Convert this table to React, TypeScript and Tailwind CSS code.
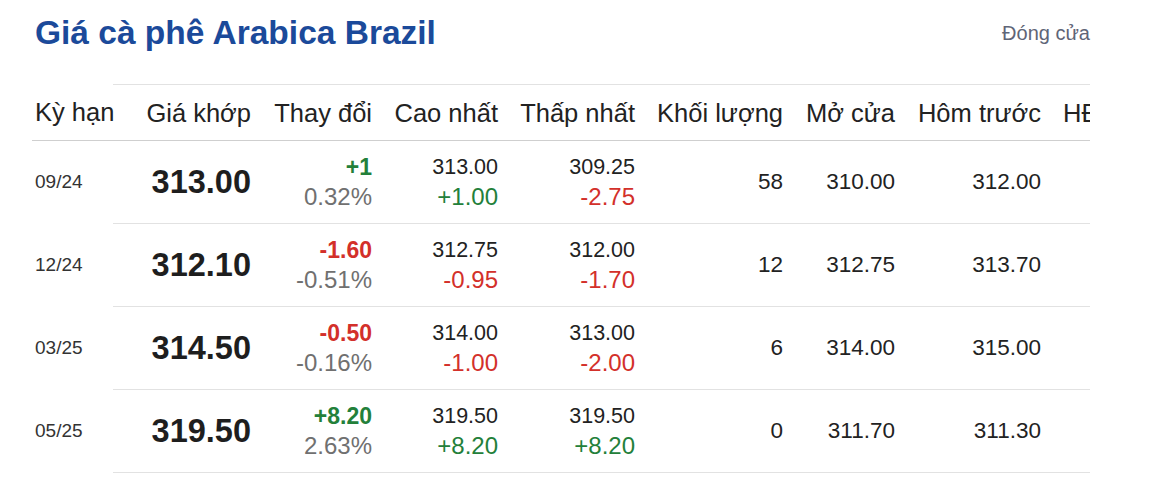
import React from "react";

type Row = {
  term: string;
  price: string;
  chg: string;
  pct: string;
  up: boolean;
  high: string;
  highChg: string;
  highUp: boolean;
  low: string;
  lowChg: string;
  lowUp: boolean;
  vol: string;
  open: string;
  prev: string;
};

const rows: Row[] = [
  { term: "09/24", price: "313.00", chg: "+1", pct: "0.32%", up: true, high: "313.00", highChg: "+1.00", highUp: true, low: "309.25", lowChg: "-2.75", lowUp: false, vol: "58", open: "310.00", prev: "312.00" },
  { term: "12/24", price: "312.10", chg: "-1.60", pct: "-0.51%", up: false, high: "312.75", highChg: "-0.95", highUp: false, low: "312.00", lowChg: "-1.70", lowUp: false, vol: "12", open: "312.75", prev: "313.70" },
  { term: "03/25", price: "314.50", chg: "-0.50", pct: "-0.16%", up: false, high: "314.00", highChg: "-1.00", highUp: false, low: "313.00", lowChg: "-2.00", lowUp: false, vol: "6", open: "314.00", prev: "315.00" },
  { term: "05/25", price: "319.50", chg: "+8.20", pct: "2.63%", up: true, high: "319.50", highChg: "+8.20", highUp: true, low: "319.50", lowChg: "+8.20", lowUp: true, vol: "0", open: "311.70", prev: "311.30" },
];

const GREEN = "text-[#23803a]";
const RED = "text-[#d3302a]";

export default function App() {
  return (
    <div className="w-[1154px] h-[486px] bg-white font-['Liberation_Sans',Arial,sans-serif] text-[#222]">
      <div className="pl-[32px] pr-[64px]">
        <div className="flex items-center justify-between h-[40px] mt-[13px] mb-[31px]">
          <h1 className="pl-[3px] text-[33.5px] font-bold text-[#1b4a9a] leading-[40px] whitespace-nowrap">
            Giá cà phê Arabica Brazil
          </h1>
          <span className="text-[20px] text-[#5f6577] whitespace-nowrap -mt-[1px]">Đóng cửa</span>
        </div>

        {/* header row */}
        <div className="flex text-[25.5px] leading-[30px] text-[#222] whitespace-nowrap">
          <div className="w-[81px] shrink-0 pl-[3px] border-b border-[#cfcfcf] flex items-center h-[57px] overflow-visible">
            Kỳ hạn
          </div>
          <div className="flex-1 flex overflow-hidden border-t border-b border-t-[#e2e2e2] border-b-[#cfcfcf] h-[57px] items-center">
            <div className="w-[150px] shrink-0 text-right pr-[12px]">Giá khớp</div>
            <div className="w-[121px] shrink-0 text-right pr-[12px]">Thay đổi</div>
            <div className="w-[126px] shrink-0 text-right pr-[12px]">Cao nhất</div>
            <div className="w-[137px] shrink-0 text-right pr-[12px]">Thấp nhất</div>
            <div className="w-[148px] shrink-0 text-right pr-[12px]">Khối lượng</div>
            <div className="w-[112px] shrink-0 text-right pr-[12px]">Mở cửa</div>
            <div className="w-[146px] shrink-0 text-right pr-[12px]">Hôm trước</div>
            <div className="w-[120px] shrink-0 pl-[10px]">HĐ mở</div>
          </div>
        </div>

        {rows.map((r) => (
          <div key={r.term} className="flex whitespace-nowrap">
            <div className="w-[81px] shrink-0 pl-[3px] flex items-center h-[83px] pb-[1px] text-[19px] text-[#333]">
              {r.term}
            </div>
            <div className="flex-1 flex overflow-hidden border-b border-[#e2e2e2] h-[83px] items-center">
              <div className="w-[150px] shrink-0 text-right pr-[12px] text-[32.5px] font-bold text-[#1e1e1e]">
                {r.price}
              </div>
              <div className="w-[121px] shrink-0 text-right pr-[12px] flex flex-col leading-[30px]">
                <span className={`text-[23px] font-bold ${r.up ? GREEN : RED}`}>{r.chg}</span>
                <span className="text-[24px] text-[#707070]">{r.pct}</span>
              </div>
              <div className="w-[126px] shrink-0 text-right pr-[12px] flex flex-col leading-[30px]">
                <span className="text-[21.5px] text-[#222]">{r.high}</span>
                <span className={`text-[24px] ${r.highUp ? GREEN : RED}`}>{r.highChg}</span>
              </div>
              <div className="w-[137px] shrink-0 text-right pr-[12px] flex flex-col leading-[30px]">
                <span className="text-[21.5px] text-[#222]">{r.low}</span>
                <span className={`text-[24px] ${r.lowUp ? GREEN : RED}`}>{r.lowChg}</span>
              </div>
              <div className="w-[148px] shrink-0 text-right pr-[12px] text-[22.5px] text-[#222]">{r.vol}</div>
              <div className="w-[112px] shrink-0 text-right pr-[12px] text-[22.5px] text-[#222]">{r.open}</div>
              <div className="w-[146px] shrink-0 text-right pr-[12px] text-[22.5px] text-[#222]">{r.prev}</div>
              <div className="w-[120px] shrink-0 pl-[10px]"></div>
            </div>
          </div>
        ))}
      </div>
    </div>
  );
}
